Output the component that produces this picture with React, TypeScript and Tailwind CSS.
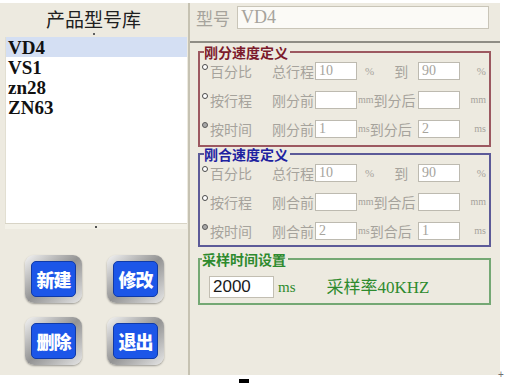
import React from 'react'

const cjk = "font-['Noto_Sans_CJK_SC',sans-serif]"
const serif = "font-['Liberation_Serif','Noto_Sans_CJK_SC',serif]"

const models = ['VD4', 'VS1', 'zn28', 'ZN63']

interface RowProps {
  mode: string
  label: string
  v1: string
  v2: string
  unit: string
  after: string
  checked?: boolean
  percent?: boolean
}

function Radio({ checked }: { checked?: boolean }) {
  return (
    <div className="w-[8px] self-start pt-[3px]">
      <div
        className={
          checked
            ? 'w-[6px] h-[6px] rounded-full border border-[#5a5a5a] bg-[#a8a8a8]'
            : 'w-[6px] h-[6px] rounded-full border border-[#4a4a4a] bg-white'
        }
      />
    </div>
  )
}

function Field({ value }: { value: string }) {
  return (
    <div className={`w-[42px] h-[18px] border border-[#bdbab0] bg-white pl-[3px] text-[14px] leading-[16px] text-[#a6a39c] ${serif}`}>
      {value}
    </div>
  )
}

function SpeedRow({ mode, label, v1, v2, unit, after, checked, percent }: RowProps) {
  return (
    <div className={`flex items-center h-[20px] text-[14px] leading-none text-[#a6a39c] ${cjk}`}>
      <Radio checked={checked} />
      <div className="w-[62px]">{mode}</div>
      <div className="w-[43px] text-right pr-[1px]">{label}</div>
      <Field value={v1} />
      {percent ? (
        <div className="w-[61px] flex items-center">
          <span className={`ml-[8px] text-[11px] ${serif}`}>%</span>
          <span className="ml-[20px]">到</span>
        </div>
      ) : (
        <div className="w-[61px] flex items-center">
          <span className={`ml-[1px] text-[10px] ${serif}`}>{unit}</span>
          <span>{after}</span>
        </div>
      )}
      <Field value={v2} />
      <div className={`flex-1 text-right pr-[3px] ${serif} ${percent ? 'text-[11px]' : 'text-[10px]'}`}>
        {percent ? '%' : unit}
      </div>
    </div>
  )
}

function MetalButton({ text }: { text: string }) {
  return (
    <div className="w-[57px] h-[48px] rounded-[9px] p-[6px] bg-linear-to-br from-[#f4f4f4] via-[#949494] to-[#e6e6e6] shadow-[0_1px_2px_rgba(0,0,0,0.35)]">
      <div className={`w-full h-full rounded-[5px] bg-[#1c56e8] border border-[#0f3aa8] flex items-center justify-center text-white text-[18px] font-black tracking-[-1px] ${cjk}`}>
        {text}
      </div>
    </div>
  )
}

export default function App() {
  return (
    <div className="w-[506px] h-[383px] bg-white overflow-hidden relative">
      <div className="flex mt-[3px] h-[372px]">
        {/* model list */}
        <div className="w-[187px] bg-[#edeae0] flex flex-col">
          <div className="h-[34px] flex flex-col items-center">
            <div className={`pt-[6px] text-[19px] leading-[20px] text-[#202020] ${cjk}`}>产品型号库</div>
            <div className="mt-[4px] w-[2px] h-[2px] bg-[#606060]" />
          </div>
          <div className="ml-[5px] w-[182px] h-[186px] bg-white border-l border-[#e2dfd2]">
            {models.map((m, i) => (
              <div
                key={m}
                className={`h-[20px] pl-[2px] flex items-center text-[19px] font-bold leading-none text-[#111] ${serif} ${i === 0 ? 'bg-[#d4dff3]' : ''}`}
              >
                {m}
              </div>
            ))}
          </div>
          <div className="h-[6px] ml-[5px] w-[182px] bg-[#f3f1e8] border-t border-[#d8d4c6] flex justify-center items-center">
            <div className="w-[2px] h-[2px] bg-[#505050]" />
          </div>
          <div className="pt-[26px] pl-[25px] grid grid-cols-[57px_57px] gap-x-[25px] gap-y-[14px]">
            <MetalButton text="新建" />
            <MetalButton text="修改" />
            <MetalButton text="删除" />
            <MetalButton text="退出" />
          </div>
        </div>

        <div className="w-[3px] bg-[#edeae0] flex justify-center">
          <div className="w-[2px] bg-[#c6c2b2]" />
        </div>

        {/* settings */}
        <div className="w-[310px] bg-[#edeae0] flex flex-col">
          <div className="flex items-center pt-[3px]">
            <div className={`ml-[6px] w-[41px] text-[17px] leading-none text-[#a6a39c] ${cjk}`}>型号</div>
            <div className={`w-[252px] h-[23px] border border-[#c9c5b8] bg-[#fbfaf6] pl-[3px] flex items-center text-[18px] text-[#a6a39c] ${serif}`}>
              VD4
            </div>
          </div>
          <div className="mt-[12px] h-[2px] bg-[#8f8d85]" />

          <fieldset className="mt-[2px] ml-[8px] w-[293px] border-2 border-[#9c5860] pl-[2px] pb-[6px]">
            <legend className={`ml-[2px] pr-[2px] text-[14px] leading-[14px] font-bold text-[#7c1b2c] ${cjk}`}>刚分速度定义</legend>
            <div className="flex flex-col gap-[9px] pt-[2px]">
              <SpeedRow mode="百分比" label="总行程" v1="10" v2="90" unit="" after="" percent />
              <SpeedRow mode="按行程" label="刚分前" v1="" v2="" unit="mm" after="到分后" />
              <SpeedRow mode="按时间" label="刚分前" v1="1" v2="2" unit="ms" after="到分后" checked />
            </div>
          </fieldset>

          <fieldset className="ml-[8px] w-[293px] border-2 border-[#5c5a98] pl-[2px] pb-[4px]">
            <legend className={`ml-[2px] pr-[2px] text-[14px] leading-[14px] font-bold text-[#1e22a0] ${cjk}`}>刚合速度定义</legend>
            <div className="flex flex-col gap-[9px] pt-[2px]">
              <SpeedRow mode="百分比" label="总行程" v1="10" v2="90" unit="" after="" percent />
              <SpeedRow mode="按行程" label="刚合前" v1="" v2="" unit="mm" after="到合后" />
              <SpeedRow mode="按时间" label="刚合前" v1="2" v2="1" unit="ms" after="到合后" checked />
            </div>
          </fieldset>

          <fieldset className="mt-[5px] ml-[8px] w-[293px] border-2 border-[#74a874] pb-[2px]">
            <legend className={`ml-[2px] pr-[2px] text-[14px] leading-[14px] font-bold text-[#2e8a2e] ${cjk}`}>采样时间设置</legend>
            <div className="flex items-center mt-[7px]">
              <div className="ml-[9px] w-[65px] h-[22px] border border-[#c2beb2] bg-white pl-[3px] flex items-center text-[17px] text-[#1a1a1a] font-['Liberation_Sans',sans-serif]">
                2000
              </div>
              <span className={`ml-[4px] text-[15px] text-[#2e8a2e] ${serif}`}>ms</span>
              <span className={`ml-[31px] text-[17px] text-[#2e8a2e] ${cjk}`}>
                采样率<span className={serif}>40KHZ</span>
              </span>
            </div>
          </fieldset>
        </div>
      </div>

      <div className="flex h-[8px] items-end">
        <div className="ml-[239px] w-[10px] h-[4px] bg-black" />
      </div>
      <div className="absolute left-[498px] top-[370px] text-[10px] leading-none text-[#707070] font-['Liberation_Sans',sans-serif]">+</div>
    </div>
  )
}
